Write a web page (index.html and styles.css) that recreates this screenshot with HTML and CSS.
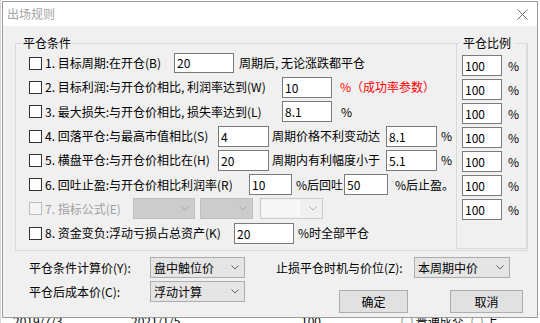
FILE: index.html
```html
<!DOCTYPE html>
<html lang="zh">
<head>
<meta charset="utf-8">
<title>出场规则</title>
<link rel="stylesheet" href="styles.css">
</head>
<body>
<div class="desktop">
  <div class="strip">
    <span class="bg1">2019/7/3</span><span class="bg2">2021/1/5</span><span class="bg3">100</span><span class="bg4">○ 普通成交</span><span class="bg5">○ 上</span>
  </div>
</div>

<div class="dialog">
  <div class="titlebar">
    <span class="title">出场规则</span>
    <svg class="close" width="11" height="11" viewBox="0 0 11 11"><path d="M0.5 0.5 L10.5 10.5 M10.5 0.5 L0.5 10.5" stroke="#6a6a6a" stroke-width="1" fill="none"/></svg>
  </div>
  <div class="body">
    <div class="groups">
      <fieldset class="grp main">
        <legend>平仓条件</legend>
        <div class="rows">
          <div class="row">
            <span class="cb"></span><span class="lbl l1">1. 目标周期:在开仓(B)</span>
            <span class="inp h20 w60">20</span><span class="txt m5">周期后, 无论涨跌都平仓</span>
          </div>
          <div class="row">
            <span class="cb"></span><span class="lbl l2">2. 目标利润:与开仓价相比, 利润率达到(W)</span>
            <span class="inp w50">10</span><span class="txt m8 red">%（成功率参数）</span>
          </div>
          <div class="row">
            <span class="cb"></span><span class="lbl l2">3. 最大损失:与开仓价相比, 损失率达到(L)</span>
            <span class="inp w50">8.1</span><span class="txt m9">%</span>
          </div>
          <div class="row">
            <span class="cb"></span><span class="lbl l4">4. 回落平仓:与最高市值相比(S)</span>
            <span class="inp w51">4</span><span class="txt m3 t114">周期价格不利变动达</span>
            <span class="inp w51">8.1</span><span class="txt m4">%</span>
          </div>
          <div class="row">
            <span class="cb"></span><span class="lbl l4">5. 横盘平仓:与开仓价相比在(H)</span>
            <span class="inp w51">20</span><span class="txt m3 t114">周期内有利幅度小于</span>
            <span class="inp w51">5.1</span><span class="txt m4">%</span>
          </div>
          <div class="row">
            <span class="cb"></span><span class="lbl l6">6. 回吐止盈:与开仓价相比利润率(R)</span>
            <span class="inp w43">10</span><span class="txt m4 t48">%后回吐</span>
            <span class="inp w44">50</span><span class="txt m7">%后止盈。</span>
          </div>
          <div class="row">
            <span class="cb dis"></span><span class="lbl l7 gray">7. 指标公式(E)</span>
            <span class="combo dis c62"><span></span><svg width="8" height="5" viewBox="0 0 8 5"><polyline points="0.5,0.5 4,4 7.5,0.5" fill="none" stroke="#a8a8a8"/></svg></span>
            <span class="combo dis c53 m5"><span></span><svg width="8" height="5" viewBox="0 0 8 5"><polyline points="0.5,0.5 4,4 7.5,0.5" fill="none" stroke="#a8a8a8"/></svg></span>
            <span class="combo edit c63 m7"><span class="editpart"></span><svg width="8" height="5" viewBox="0 0 8 5"><polyline points="0.5,0.5 4,4 7.5,0.5" fill="none" stroke="#b0b0b0"/></svg></span>
          </div>
          <div class="row">
            <span class="cb"></span><span class="lbl l8">8. 资金变负:浮动亏损占总资产(K)</span>
            <span class="inp w60">20</span><span class="txt m4">%时全部平仓</span>
          </div>
        </div>
      </fieldset>
      <fieldset class="grp ratio">
        <legend>平仓比例</legend>
        <div class="ratios">
          <div class="rrow"><span class="inp w40">100</span><span class="pct">%</span></div>
          <div class="rrow"><span class="inp w40">100</span><span class="pct">%</span></div>
          <div class="rrow"><span class="inp w40">100</span><span class="pct">%</span></div>
          <div class="rrow"><span class="inp w40">100</span><span class="pct">%</span></div>
          <div class="rrow"><span class="inp w40">100</span><span class="pct">%</span></div>
          <div class="rrow"><span class="inp w40">100</span><span class="pct">%</span></div>
          <div class="rrow"><span class="inp w40">100</span><span class="pct">%</span></div>
        </div>
      </fieldset>
    </div>

    <div class="bottom">
      <div class="bcol">
        <div class="brow"><span class="blbl b121">平仓条件计算价(Y):</span><span class="combo c95"><span>盘中触位价</span><svg width="8" height="5" viewBox="0 0 8 5"><polyline points="0.5,0.5 4,4 7.5,0.5" fill="none" stroke="#606060"/></svg></span></div>
        <div class="brow"><span class="blbl b121">平仓后成本价(C):</span><span class="combo c95"><span>浮动计算</span><svg width="8" height="5" viewBox="0 0 8 5"><polyline points="0.5,0.5 4,4 7.5,0.5" fill="none" stroke="#606060"/></svg></span></div>
      </div>
      <div class="bcol right">
        <div class="brow"><span class="blbl b138">止损平仓时机与价位(Z):</span><span class="combo c96"><span>本周期中价</span><svg width="8" height="5" viewBox="0 0 8 5"><polyline points="0.5,0.5 4,4 7.5,0.5" fill="none" stroke="#606060"/></svg></span></div>
        <div class="buttons">
          <span class="btn ok">确定</span>
          <span class="btn cancel">取消</span>
        </div>
      </div>
    </div>
  </div>
</div>
</body>
</html>
```

FILE: styles.css
```css
* { box-sizing: border-box; }

html, body {
  margin: 0;
  padding: 0;
  width: 540px;
  height: 323px;
  overflow: hidden;
  background: #ffffff;
  font-family: "Noto Sans CJK SC", "Noto Sans", sans-serif;
  font-size: 12px;
  color: #000;
}

/* background application visible behind the dialog */
.desktop {
  height: 323px;
  padding-top: 314px;
  border-left: 1px solid #d8d8d8;
}
.strip {
  display: flex;
  line-height: 14px;
  white-space: nowrap;
  color: #000;
}
.bg1 { margin-left: 12px; width: 118px; }
.bg2 { width: 170px; }
.bg3 { width: 100px; }
.bg4 { width: 70px; }

/* dialog window */
.dialog {
  position: absolute;
  left: 2px;
  top: 1px;
  width: 536px;
  height: 317px;
  border: 1px solid #9c9c9c;
  background: #f0f0f0;
  display: flex;
  flex-direction: column;
}

.titlebar {
  height: 24px;
  flex: none;
  background: #ffffff;
  display: flex;
  align-items: center;
  justify-content: space-between;
  padding: 0 9px 0 4px;
}
.title {
  color: #a3a3a3;
  line-height: 14px;
}
.close { display: block; }

.body {
  flex: 1;
  padding: 10px 9px 0 12px;
  background: #f0f0f0;
}

/* group boxes */
.groups {
  display: grid;
}
.grp {
  grid-area: 1 / 1;
  margin: 0;
  padding: 0;
  min-width: 0;
  border: 1px solid #d9d9d9;
}
.grp legend {
  padding: 0 2px;
  line-height: 14px;
  height: 14px;
}
.main {
  width: 513px;
  height: 215px;
}
.main legend { margin-left: 5px; }

.ratio {
  justify-self: end;
  align-self: start;
  width: 71px;
  height: 213px;
  margin-right: 1px;
}
.ratio legend {
  margin-left: 2px;
  padding: 0 4px;
  background: #f0f0f0;
}

.rows {
  padding: 1px 0 0 13px;
  display: grid;
  grid-auto-rows: 24.3px;
}
.row {
  display: flex;
  align-items: center;
  white-space: nowrap;
}

.cb {
  width: 13px;
  height: 13px;
  flex: none;
  border: 1px solid #333333;
  background: #ffffff;
  margin-right: 3px;
}
.cb.dis {
  border-color: #bcbcbc;
  background: #f4f4f4;
}

.lbl {
  flex: none;
  line-height: 14px;
}
.l1 { width: 129px; }
.l2 { width: 237px; }
.l4 { width: 173px; }
.l6 { width: 204px; }
.l7 { width: 88px; }
.l8 { width: 189px; }
.gray { color: #a0a0a0; }

.txt {
  flex: none;
  line-height: 14px;
}
.red { color: #ff0000; }
.m3 { margin-left: 3px; }
.m4 { margin-left: 4px; }
.m5 { margin-left: 5px; }
.m7 { margin-left: 7px; }
.m8 { margin-left: 8px; }
.m9 { margin-left: 9px; }
.t114 { width: 114px; }
.t48 { width: 48px; }

.inp {
  flex: none;
  height: 21px;
  border: 1px solid #7a7a7a;
  background: #ffffff;
  padding-left: 2px;
  line-height: 19px;
}
.inp.h20 { height: 20px; line-height: 18px; }
.w40 { width: 40px; }
.w43 { width: 43px; }
.w44 { width: 44px; }
.w50 { width: 50px; }
.w51 { width: 51px; }
.w60 { width: 60px; }

/* combo boxes */
.combo {
  flex: none;
  height: 21px;
  display: flex;
  align-items: center;
  justify-content: space-between;
  border: 1px solid #adadad;
  background: #e5e5e5;
  padding: 0 5px 0 3px;
  line-height: 14px;
}
.combo svg { display: block; flex: none; }
.combo.dis {
  background: #cccccc;
  border-color: #bfbfbf;
}
.combo.edit {
  background: #f0f0f0;
  border-color: #cccccc;
  padding-left: 1px;
}
.editpart {
  width: 38px;
  height: 17px;
  background: #f7f7f7;
}
.c53 { width: 53px; }
.c62 { width: 62px; }
.c63 { width: 63px; }
.c95 { width: 95px; }
.c96 { width: 96px; }

/* right column ratios */
.ratios {
  padding: 5px 0 0 5px;
  display: grid;
  grid-auto-rows: 21px;
  row-gap: 3px;
}
.rrow {
  display: flex;
  align-items: center;
}
.pct {
  margin-left: 6px;
  line-height: 14px;
}

/* bottom area */
.bottom {
  display: flex;
  margin-top: 6px;
  padding-left: 14px;
}
.bcol {
  display: flex;
  flex-direction: column;
  row-gap: 3px;
}
.bcol.right {
  margin-left: 31px;
  row-gap: 12px;
}
.brow {
  display: flex;
  align-items: center;
  height: 21px;
}
.blbl {
  flex: none;
  line-height: 14px;
  white-space: nowrap;
}
.b121 { width: 121px; }
.b138 { width: 138px; }

.buttons {
  display: flex;
}
.btn {
  height: 23px;
  display: flex;
  align-items: center;
  justify-content: center;
  background: #e1e1e1;
  border: 1px solid #adadad;
  line-height: 14px;
}
.ok { width: 69px; margin-left: 63px; }
.cancel { width: 73px; margin-left: 42px; }
```
